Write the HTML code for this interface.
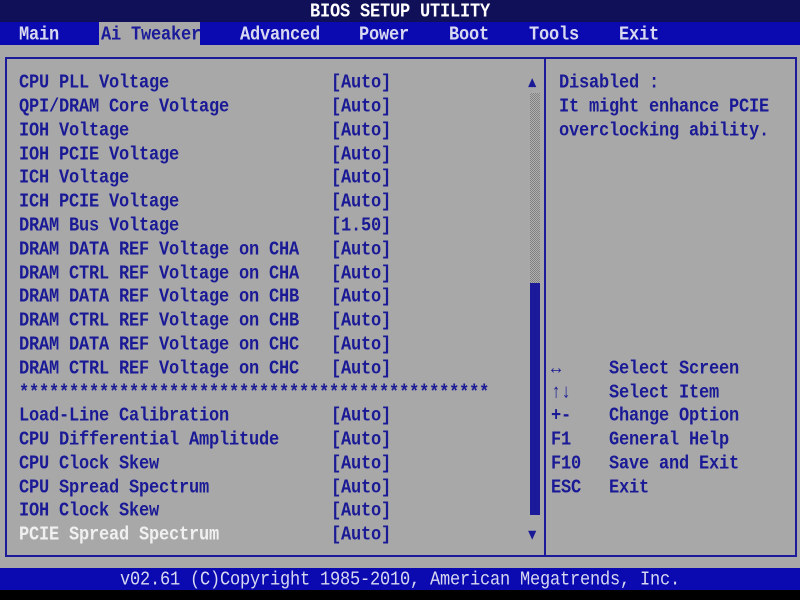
<!DOCTYPE html>
<html><head><meta charset="utf-8"><style>
*{margin:0;padding:0;box-sizing:border-box}
body{width:800px;height:600px;overflow:hidden;background:#a8a8a8;position:relative;font-family:"Liberation Mono","DejaVu Sans Mono",monospace;font-weight:bold;font-size:17px;letter-spacing:-0.2px;color:#1a1a96}
.t{position:absolute;white-space:pre;line-height:24px;height:24px;transform:translateY(3px) scaleY(1.15);transform-origin:center}
#top{position:absolute;left:0;top:0;width:800px;height:22px;background:#101058}
#tabs{position:absolute;left:0;top:22px;width:800px;height:23px;background:#0a0ab0}
#foot{position:absolute;left:0;top:568px;width:800px;height:22px;background:#0a0ab0}
#blk{position:absolute;left:0;top:590px;width:800px;height:10px;background:#000}
.w{color:#d8d8f0}
#box{position:absolute;left:5px;top:57px;width:792px;height:500px;border:2px solid #1a1a9a}
#div{position:absolute;left:544px;top:57px;width:2px;height:500px;background:#1a1a9a}
#track{position:absolute;left:530px;top:93px;width:10px;height:190px;background:repeating-conic-gradient(#808080 0 25%,#b0b0b0 0 50%) 0 0/2px 2px}
#thumb{position:absolute;left:530px;top:283px;width:10px;height:232px;background:#1a1a9a}
</style></head><body>
<div id="top"></div><div id="tabs"></div><div id="foot"></div><div id="blk"></div>
<div id="box"></div><div id="div"></div><div id="track"></div><div id="thumb"></div>
<div class="t" style="left:0;width:800px;text-align:center;top:-2px;color:#fff">BIOS SETUP UTILITY</div>
<div style="position:absolute;left:99px;top:22px;width:101px;height:23px;background:#a8a8a8"></div>
<div class="t w" style="left:19px;top:21px">Main</div>
<div class="t" style="left:101px;top:21px;color:#1a1a9a">Ai Tweaker</div>
<div class="t w" style="left:240px;top:21px">Advanced</div>
<div class="t w" style="left:359px;top:21px">Power</div>
<div class="t w" style="left:449px;top:21px">Boot</div>
<div class="t w" style="left:529px;top:21px">Tools</div>
<div class="t w" style="left:619px;top:21px">Exit</div>

<div class="t" style="left:19px;top:69px">CPU PLL Voltage</div><div class="t" style="left:331px;top:69px">[Auto]</div>
<div class="t" style="left:19px;top:93px">QPI/DRAM Core Voltage</div><div class="t" style="left:331px;top:93px">[Auto]</div>
<div class="t" style="left:19px;top:117px">IOH Voltage</div><div class="t" style="left:331px;top:117px">[Auto]</div>
<div class="t" style="left:19px;top:141px">IOH PCIE Voltage</div><div class="t" style="left:331px;top:141px">[Auto]</div>
<div class="t" style="left:19px;top:164px">ICH Voltage</div><div class="t" style="left:331px;top:164px">[Auto]</div>
<div class="t" style="left:19px;top:188px">ICH PCIE Voltage</div><div class="t" style="left:331px;top:188px">[Auto]</div>
<div class="t" style="left:19px;top:212px">DRAM Bus Voltage</div><div class="t" style="left:331px;top:212px">[1.50]</div>
<div class="t" style="left:19px;top:236px">DRAM DATA REF Voltage on CHA</div><div class="t" style="left:331px;top:236px">[Auto]</div>
<div class="t" style="left:19px;top:260px">DRAM CTRL REF Voltage on CHA</div><div class="t" style="left:331px;top:260px">[Auto]</div>
<div class="t" style="left:19px;top:283px">DRAM DATA REF Voltage on CHB</div><div class="t" style="left:331px;top:283px">[Auto]</div>
<div class="t" style="left:19px;top:307px">DRAM CTRL REF Voltage on CHB</div><div class="t" style="left:331px;top:307px">[Auto]</div>
<div class="t" style="left:19px;top:331px">DRAM DATA REF Voltage on CHC</div><div class="t" style="left:331px;top:331px">[Auto]</div>
<div class="t" style="left:19px;top:355px">DRAM CTRL REF Voltage on CHC</div><div class="t" style="left:331px;top:355px">[Auto]</div>
<div class="t" style="left:19px;top:379px">***********************************************</div>
<div class="t" style="left:19px;top:402px">Load-Line Calibration</div><div class="t" style="left:331px;top:402px">[Auto]</div>
<div class="t" style="left:19px;top:426px">CPU Differential Amplitude</div><div class="t" style="left:331px;top:426px">[Auto]</div>
<div class="t" style="left:19px;top:450px">CPU Clock Skew</div><div class="t" style="left:331px;top:450px">[Auto]</div>
<div class="t" style="left:19px;top:474px">CPU Spread Spectrum</div><div class="t" style="left:331px;top:474px">[Auto]</div>
<div class="t" style="left:19px;top:497px">IOH Clock Skew</div><div class="t" style="left:331px;top:497px">[Auto]</div>
<div class="t" style="left:19px;top:521px;color:#f0f0f0">PCIE Spread Spectrum</div><div class="t" style="left:331px;top:521px">[Auto]</div>

<div class="t" style="left:528px;top:69px;font-size:14px">▲</div>
<div class="t" style="left:528px;top:521px;font-size:14px">▼</div>

<div class="t" style="left:559px;top:69px">Disabled :</div>
<div class="t" style="left:559px;top:93px">It might enhance PCIE</div>
<div class="t" style="left:559px;top:117px">overclocking ability.</div>

<div class="t" style="left:551px;top:355px">↔</div><div class="t" style="left:609px;top:355px">Select Screen</div>
<div class="t" style="left:551px;top:379px">↑↓</div><div class="t" style="left:609px;top:379px">Select Item</div>
<div class="t" style="left:551px;top:402px">+-</div><div class="t" style="left:609px;top:402px">Change Option</div>
<div class="t" style="left:551px;top:426px">F1</div><div class="t" style="left:609px;top:426px">General Help</div>
<div class="t" style="left:551px;top:450px">F10</div><div class="t" style="left:609px;top:450px">Save and Exit</div>
<div class="t" style="left:551px;top:474px">ESC</div><div class="t" style="left:609px;top:474px">Exit</div>

<div class="t w" style="left:0;width:800px;text-align:center;top:566px;font-weight:normal">v02.61 (C)Copyright 1985-2010, American Megatrends, Inc.</div>
</body></html>
